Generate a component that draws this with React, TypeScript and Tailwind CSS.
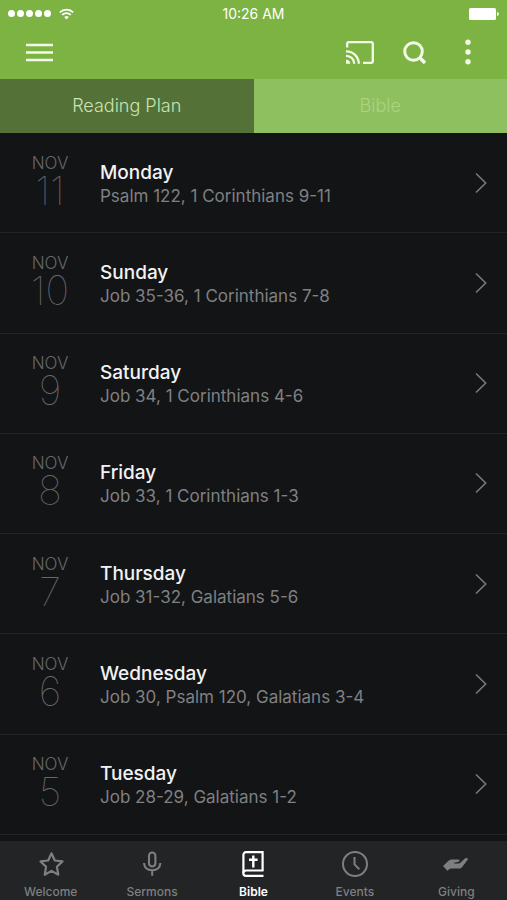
import type { ReactNode } from 'react'
import { useState } from 'react'

interface Reading {
  month: string
  day: number
  weekday: string
  passages: string
}

const readings: Reading[] = [
  { month: 'NOV', day: 11, weekday: 'Monday', passages: 'Psalm 122, 1 Corinthians 9-11' },
  { month: 'NOV', day: 10, weekday: 'Sunday', passages: 'Job 35-36, 1 Corinthians 7-8' },
  { month: 'NOV', day: 9, weekday: 'Saturday', passages: 'Job 34, 1 Corinthians 4-6' },
  { month: 'NOV', day: 8, weekday: 'Friday', passages: 'Job 33, 1 Corinthians 1-3' },
  { month: 'NOV', day: 7, weekday: 'Thursday', passages: 'Job 31-32, Galatians 5-6' },
  { month: 'NOV', day: 6, weekday: 'Wednesday', passages: 'Job 30, Psalm 120, Galatians 3-4' },
  { month: 'NOV', day: 5, weekday: 'Tuesday', passages: 'Job 28-29, Galatians 1-2' },
]

/* ---------- Icons ---------- */

const WifiIcon = () => (
  <svg width="15" height="12" viewBox="0 0 15 12" fill="none" stroke="currentColor" strokeWidth="1.7">
    <path d="M0.8 4.4a9.5 9.5 0 0 1 13.4 0" />
    <path d="M3.2 6.9a6.1 6.1 0 0 1 8.6 0" />
    <path d="M7.5 11.5 5.2 9.1a3.2 3.2 0 0 1 4.6 0z" fill="currentColor" stroke="none" />
  </svg>
)

const BatteryIcon = () => (
  <svg width="30" height="12" viewBox="0 0 30 12" fill="currentColor">
    <rect width="27" height="12" rx="1.5" />
    <path d="M28 4c1.2.3 1.8 1.1 1.8 2s-.6 1.7-1.8 2z" />
  </svg>
)

const MenuIcon = () => (
  <svg width="27" height="19" viewBox="0 0 27 19" stroke="currentColor" strokeWidth="2.6">
    <path d="M0 2h27M0 9.500h27M0 17h27" />
  </svg>
)

const CastIcon = () => (
  <svg width="28" height="23" viewBox="0 0 28 23" fill="none" stroke="currentColor" strokeWidth="2.3">
    <path d="M1.200 6.500V2.700a1.500 1.500 0 0 1 1.500-1.500h22.600a1.500 1.500 0 0 1 1.500 1.500v17.600a1.500 1.500 0 0 1-1.500 1.500H17" />
    <path d="M0 10.300A12.400 12.400 0 0 1 12.800 22.800M0 14.800a7.900 7.900 0 0 1 8.200 8" />
    <path d="M0 18.700a4 4 0 0 1 4.200 4.100H0z" fill="currentColor" stroke="none" />
  </svg>
)

const SearchIcon = () => (
  <svg width="23" height="23" viewBox="0 0 23 23" fill="none" stroke="currentColor" strokeWidth="3">
    <circle cx="10.500" cy="10.500" r="8.800" />
    <path d="m16.500 16.500 5.500 5.500" strokeWidth="3.400" />
  </svg>
)

const MoreIcon = () => (
  <svg width="6" height="26" viewBox="0 0 6 26" fill="currentColor">
    <circle cx="3" cy="3.200" r="2.700" />
    <circle cx="3" cy="13" r="2.700" />
    <circle cx="3" cy="22.800" r="2.700" />
  </svg>
)

const ChevronIcon = () => (
  <svg width="12" height="22" viewBox="0 0 12 22" fill="none" stroke="currentColor" strokeWidth="1.600">
    <path d="m1 1.500 9.700 9.500L1 20.500" />
  </svg>
)

const StarIcon = () => (
  <svg width="28" height="28" viewBox="0 0 28 28" fill="none" stroke="currentColor" strokeWidth="2.200" strokeLinejoin="round">
    <path d="m14.500 3.300 3.300 7.200 7.700.9-5.600 5.400 1.400 7.900-6.800-3.800-6.800 3.800 1.400-7.900-5.600-5.400 7.700-.9z" />
  </svg>
)

const MicIcon = () => (
  <svg width="28" height="28" viewBox="0 0 28 28" fill="none" stroke="currentColor" strokeWidth="2.100">
    <rect x="11" y="2.500" width="6.400" height="14" rx="3.200" />
    <path d="M6 13c.4 4.600 3.700 7.200 8.200 7.200s7.800-2.600 8.200-7.200M14.200 20.200v5.600" />
  </svg>
)

const BibleIcon = () => (
  <svg width="28" height="28" viewBox="0 0 28 28" fill="none" stroke="currentColor" strokeWidth="2.200">
    <path d="M24.500 20.500H7a2.600 2.600 0 0 0 0 5.300h17.500" />
    <path d="M4.400 23V4.700a2.500 2.500 0 0 1 2.500-2.500h16.700v18.300" />
    <path d="M14.300 5.500v12M10 9.700h8.600" strokeWidth="2.400" />
  </svg>
)

const ClockIcon = () => (
  <svg width="28" height="28" viewBox="0 0 28 28" fill="none" stroke="currentColor" strokeWidth="2">
    <circle cx="14" cy="14" r="12" />
    <path d="M13.500 7v7.400l4.800 4.800" />
  </svg>
)

const GivingIcon = () => (
  <svg width="28" height="28" viewBox="0 0 28 28" fill="currentColor">
    <path d="M1 16 6.800 10.600c1-.9 2-1.200 3.200-1.200h6.200c1.700 0 1.700 2.100.4 2.400l-4.400.9c-.5.200-.4.800.1.800h3.900c1.200 0 2-.4 2.700-1.200l3.700-3.600c.8-.8 2-.7 2.900-.3.600.4.500.9 0 1.500l-5.300 7c-.9 1.100-1.800 1.500-3 1.500H9.400c-.9 0-1.500.3-2.200.9l-1.800 1.500z" />
  </svg>
)

/* ---------- Sections ---------- */

function StatusBar() {
  return (
    <div className="grid h-[27px] grid-cols-3 items-center px-2 text-white">
      <div className="flex items-center gap-2">
        <div className="flex gap-0.5">
          {[0, 1, 2, 3, 4].map(dot => (
            <span key={dot} className="size-[7px] rounded-full bg-white" />
          ))}
        </div>
        <WifiIcon />
      </div>
      <time className="text-center text-sm leading-4">10:26 AM</time>
      <div className="flex justify-end">
        <BatteryIcon />
      </div>
    </div>
  )
}

function ReadingRow({ month, day, weekday, passages }: Reading) {
  return (
    <li className="flex flex-1 border-b border-[#222325]">
      <a href="#reading" className="flex flex-1 items-center pr-5">
        <div className="w-[100px] pb-1 text-center text-[#666769]">
          <div className="text-[17px] leading-5 font-light">{month}</div>
          <div className="text-[40px] leading-9 font-thin">{day}</div>
        </div>
        <div className="min-w-0 flex-1 pt-0.5">
          <h2 className="text-[19px] leading-6 font-medium text-[#f2f2f2]">{weekday}</h2>
          <p className="text-[17px] leading-[22px] text-[#7f8082]">{passages}</p>
        </div>
        <span className="text-[#77787a]">
          <ChevronIcon />
        </span>
      </a>
    </li>
  )
}

function NavItem({ label, icon, active = false }: { label: string; icon: ReactNode; active?: boolean }) {
  return (
    <a
      href={`#${label.toLowerCase()}`}
      aria-current={active ? 'page' : undefined}
      className={`flex flex-col items-center gap-1.5 pt-[9px] ${active ? 'font-semibold text-white' : 'font-medium text-[#7e7f80]'}`}
    >
      {icon}
      <span className="text-xs leading-4">{label}</span>
    </a>
  )
}

export default function App() {
  const [tab, setTab] = useState<'plan' | 'bible'>('plan')

  const tabClass = (selected: boolean) =>
    selected ? 'bg-[#547238] text-[#cbe3b2]' : 'bg-[#8fc060] text-[#abd481]'

  return (
    <div className="flex min-h-screen flex-col bg-[#131416] font-['Inter','Liberation_Sans',sans-serif] antialiased">
      <header className="bg-[#7cb342]">
        <StatusBar />
        <div className="flex h-[52px] items-center gap-[29px] pr-9 pb-0.5 pl-[26px] text-[#f4fae9]">
          <button type="button" aria-label="Menu" className="mr-auto">
            <MenuIcon />
          </button>
          <button type="button" aria-label="Cast">
            <CastIcon />
          </button>
          <button type="button" aria-label="Search">
            <SearchIcon />
          </button>
          <button type="button" aria-label="More options" className="ml-2.5">
            <MoreIcon />
          </button>
        </div>
        <div role="tablist" className="grid h-[54px] grid-cols-2 text-lg font-light">
          <button type="button" role="tab" aria-selected={tab === 'plan'} onClick={() => setTab('plan')} className={tabClass(tab === 'plan')}>
            Reading Plan
          </button>
          <button type="button" role="tab" aria-selected={tab === 'bible'} onClick={() => setTab('bible')} className={tabClass(tab === 'bible')}>
            Bible
          </button>
        </div>
      </header>

      <main className="flex flex-1 flex-col pb-1.5">
        <ul className="flex flex-1 flex-col">
          {readings.map(reading => (
            <ReadingRow key={reading.day} {...reading} />
          ))}
        </ul>
      </main>

      <nav className="grid grid-cols-5 bg-[#232426]">
        <NavItem label="Welcome" icon={<StarIcon />} />
        <NavItem label="Sermons" icon={<MicIcon />} />
        <NavItem label="Bible" icon={<BibleIcon />} active />
        <NavItem label="Events" icon={<ClockIcon />} />
        <NavItem label="Giving" icon={<GivingIcon />} />
      </nav>
    </div>
  )
}
